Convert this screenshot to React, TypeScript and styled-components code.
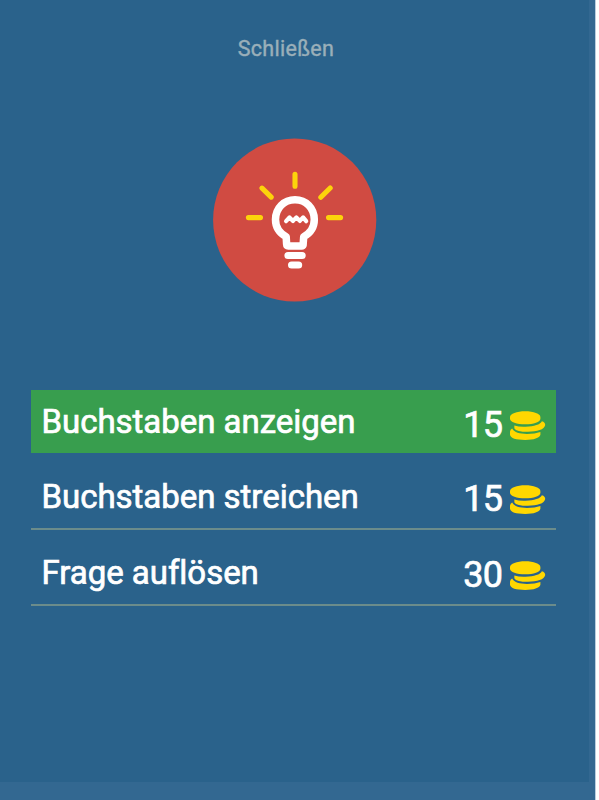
import React from "react";
import styled, { createGlobalStyle } from "styled-components";

const GlobalStyle = createGlobalStyle`
  * { box-sizing: border-box; }
  body { margin: 0; background: #fff; font-family: Roboto, "Noto Sans", sans-serif; }
`;

const Backdrop = styled.div`
  width: 596px;
  height: 800px;
  padding-right: 6px;
  background: #336891;
  border-right: 1px solid #b9cee0;
`;

const Dialog = styled.main`
  width: 589px;
  height: 782px;
  display: flex;
  flex-direction: column;
  align-items: center;
  background: #2a628b;
`;

const CloseButton = styled.button`
  margin: 35px 0 0 -17px;
  padding: 0;
  height: 28px;
  border: 0;
  background: none;
  color: #9aafb9;
  font: 400 21.5px/28px Roboto, sans-serif;
  letter-spacing: 0.3px;
  -webkit-text-stroke: 0.4px currentColor;
`;

const HintIcon = styled.svg`
  display: block;
  flex: none;
  width: 164px;
  height: 164px;
  margin: 75px 0 0 1px;
`;

const Options = styled.div`
  display: flex;
  flex-direction: column;
  gap: 12px;
  width: 525px;
  margin: 88px 0 0 -3px;
`;

const Option = styled.div<{ $active?: boolean }>`
  display: flex;
  align-items: center;
  justify-content: space-between;
  height: ${(p) => (p.$active ? 63 : 64)}px;
  margin-bottom: ${(p) => (p.$active ? 1 : 0)}px;
  padding: ${(p) => (p.$active ? "1px 10px 0 11px" : "0 10px 0 11px")};
  background: ${(p) => (p.$active ? "#389e4e" : "transparent")};
  border-bottom: ${(p) => (p.$active ? "0" : "2px solid #6b8c8b")};
  color: #fff;
  -webkit-text-stroke: 0.7px currentColor;
`;

const Label = styled.span`
  font: 400 33px/40px Roboto, sans-serif;
  letter-spacing: -0.03px;
  white-space: nowrap;
`;

const Price = styled.span<{ $active?: boolean }>`
  display: flex;
  align-items: center;
  gap: 7px;
  margin-top: ${(p) => (p.$active ? 5 : 4)}px;
  font: 400 36px/40px Roboto, sans-serif;
  letter-spacing: -0.6px;
`;

const CoinsSvg = styled.svg`
  display: block;
  width: 36px;
  height: 30px;
  margin-top: 2px;
`;

const Coins = () => (
  <CoinsSvg viewBox="0 0 36 30" fill="#ffd700">
    <path d="M0 6C0 2.7 6.8.2 15.2.2S30.4 2.7 30.4 6V7.7C30.4 11 23.6 13.3 15.2 13.3S0 11 0 7.7Z" />
    <path d="M4.3 14.5Q9.2 16 15.5 15.7C24.5 15.3 30 13.6 31.9 10.2Q35.2 11.2 35.2 14.1C34.5 18.7 27 20.8 18 20.8Q6.3 20.8 4.4 17.4Z" />
    <path d="M2.2 17.6C4.4 21.6 9.5 22.9 17 22.9Q25 22.9 30.4 20.9V23.7C29.5 27 23.8 28.9 15.3 28.9Q1 28.9 0 23.7V20.4Q.3 18.5 2.2 17.6Z" />
  </CoinsSvg>
);

const Bulb = () => (
  <HintIcon viewBox="0 0 164 164" fill="none" strokeLinecap="round" strokeLinejoin="round">
    <circle cx="81.7" cy="82" r="81.6" fill="#d04b42" />
    <path d="M82 36.3V48.2M49 50.1l9.2 9M117.2 50l-9.4 9.3M35.4 79.6h12.1M115.5 79.6h12.1" stroke="#fcd30b" strokeWidth="5.1" />
    <path d="M73.2 98.8C66.2 95 62.5 88.7 62.5 81.6C62.5 70 71 61.7 82 61.7S101.3 70 101.3 81.6C101.3 88.7 97.6 95 90.7 98.8L90.1 107Q89.8 107.9 88.8 107.9H75.2Q73.7 107.9 73.6 106Z" stroke="#fff" strokeWidth="7.5" />
    <path d="M73.1 83.2l3.4-3.8 3.5 3.5 3.4-3.5 3.4 3.5 3.3-3.5 3.1 3.8" stroke="#fff" strokeWidth="4.2" />
    <path d="M75 117.5h14.1M78.6 127h7" stroke="#fff" strokeWidth="7.2" />
  </HintIcon>
);

const options = [
  { label: "Buchstaben anzeigen", price: 15, active: true },
  { label: "Buchstaben streichen", price: 15, active: false },
  { label: "Frage auflösen", price: 30, active: false },
];

export default function App() {
  return (
    <>
      <GlobalStyle />
      <Backdrop>
        <Dialog>
          <CloseButton>Schließen</CloseButton>
          <Bulb />
          <Options>
            {options.map((option) => (
              <Option key={option.label} $active={option.active}>
                <Label>{option.label}</Label>
                <Price $active={option.active}>
                  {option.price}
                  <Coins />
                </Price>
              </Option>
            ))}
          </Options>
        </Dialog>
      </Backdrop>
    </>
  );
}
